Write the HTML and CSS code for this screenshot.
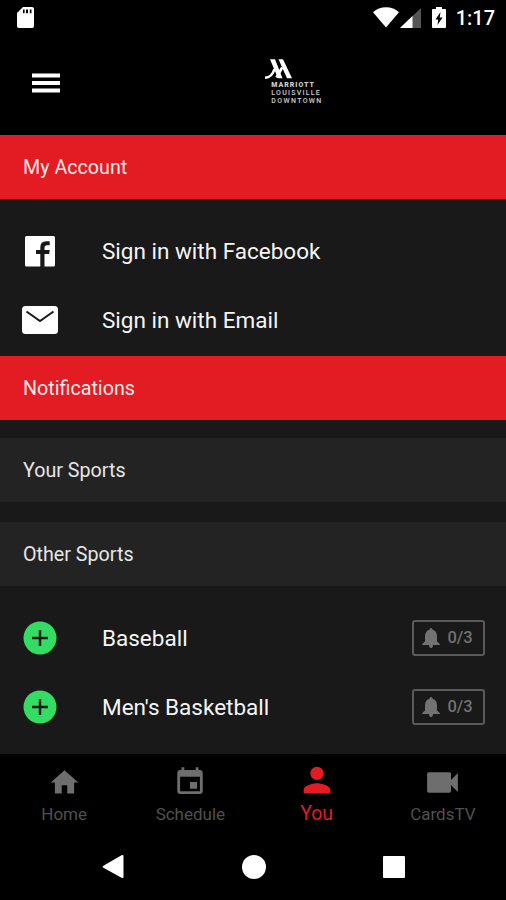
FILE: index.html
```html
<!DOCTYPE html>
<html lang="en">
  <head>
    <meta charset="utf-8" />
    <title>My Account</title>
    <link rel="stylesheet" href="styles.css">
  </head>
  <body>
    <div class="status-bar">
      <svg class="sd-card" width="17" height="21" viewBox="0 0 17 21">
        <path fill="#fff" d="M6 0h9a2 2 0 0 1 2 2v17a2 2 0 0 1-2 2H2a2 2 0 0 1-2-2V6z" />
        <path fill="#000" d="M6 2.500h1.600v3.800H6zM9 2.500h2v3.800H9zM12.800 2.500h1.700v3.800h-1.700z" />
      </svg>
      <div class="status-icons">
        <svg width="26" height="21" viewBox="0 0 26 21">
          <path fill="#fff" d="M13 20.500L0 5.200C3.600 2 8 .2 13 .2S22.400 2 26 5.200z" />
        </svg>
        <svg class="signal" width="21" height="20" viewBox="0 0 21 20">
          <path fill="#555" d="M21 0v20H0z" />
          <path fill="#fff" d="M12.500 8.100V20H0z" />
        </svg>
        <svg class="battery" width="14" height="21" viewBox="0 0 14 21">
          <path fill="#fff" d="M4 0h6v2h3a1 1 0 0 1 1 1v17a1 1 0 0 1-1 1H1a1 1 0 0 1-1-1V3a1 1 0 0 1 1-1h3z" />
          <path fill="#000" d="M8.500 5L3.500 12.500h2.700L5.500 18l5-7.500H7.700z" />
        </svg>
        <span class="clock">1:17</span>
      </div>
    </div>

    <header class="header">
      <svg class="menu" width="28" height="20" viewBox="0 0 28 20">
        <path fill="#fff" d="M0 .5h28v4H0zM0 8h28v4H0zM0 15.500h28v4H0z" />
      </svg>
      <svg class="logo" width="58" height="47" viewBox="0 0 58 47">
        <path fill="#fff" d="M5 .3h5l7.500 19h-4.500z" />
        <path fill="#fff" d="M13.500.3h4.500L27 19.300h-5z" />
        <path fill="none" stroke="#fff" stroke-width="2.600" d="M9.500 10Q7 18.500 0 18.800M17.200 8.500L11.500 18.500" />
        <g class="logo-text">
          <text class="logo-bold" x="6.300" y="27.700" textLength="42.500">MARRIOTT</text>
          <text x="6.300" y="36" textLength="48.500">LOUISVILLE</text>
          <text x="6.300" y="44.200" textLength="50">DOWNTOWN</text>
        </g>
      </svg>
    </header>

    <main class="content">
      <h2 class="section section-red">My Account</h2>
      <ul class="list">
        <li class="row">
          <svg class="row-icon" width="36" height="36" viewBox="0 0 36 36">
            <path fill="#fff" d="M4.500 3h27A1.500 1.500 0 0 1 33 4.500V32a1.500 1.500 0 0 1-1.500 1.500h-9V21h4.700l.5-4h-5.200v-2q0-2.700 2.500-2.700h2.700V8.200h-3.400q-6 0-6 6.300V17H14v4h4.300v12.500H4.500A1.500 1.500 0 0 1 3 32V4.500A1.500 1.500 0 0 1 4.500 3z" />
          </svg>
          <span class="label">Sign in with Facebook</span>
        </li>
        <li class="row">
          <svg class="row-icon" width="36" height="36" viewBox="0 0 36 36">
            <rect fill="#fff" y="4" width="36" height="28" rx="3.500" />
            <path fill="none" stroke="#191919" stroke-width="2" d="M4.500 9.500L18 19l13.500-9.500" />
          </svg>
          <span class="label">Sign in with Email</span>
        </li>
      </ul>

      <h2 class="section section-red">Notifications</h2>
      <h2 class="section section-your">Your Sports</h2>
      <h2 class="section section-other">Other Sports</h2>
      <ul class="list list-sports">
        <li class="row">
          <svg class="row-icon" width="36" height="36" viewBox="0 0 36 36">
            <circle cx="18" cy="18" r="16.500" fill="#33dc62" />
            <path stroke="#191919" stroke-width="2.500" d="M18 10v16M10 18h16" />
          </svg>
          <span class="label">Baseball</span>
          <span class="badge">
            <svg width="18" height="20" viewBox="0 0 18 20">
              <path fill="#727272" d="M9 0q1.500 0 1.500 1.800Q15 3 15 8.500V13.500l2.800 2.500v1H.2v-1L3 13.500V8.500Q3 3 7.500 1.800 7.500 0 9 0zM7 17h4q0 3-2 3t-2-3z" />
            </svg>
            0/3
          </span>
        </li>
        <li class="row">
          <svg class="row-icon" width="36" height="36" viewBox="0 0 36 36">
            <circle cx="18" cy="18" r="16.500" fill="#33dc62" />
            <path stroke="#191919" stroke-width="2.500" d="M18 10v16M10 18h16" />
          </svg>
          <span class="label">Men's Basketball</span>
          <span class="badge">
            <svg width="18" height="20" viewBox="0 0 18 20">
              <path fill="#727272" d="M9 0q1.500 0 1.500 1.800Q15 3 15 8.500V13.500l2.800 2.500v1H.2v-1L3 13.500V8.500Q3 3 7.500 1.800 7.500 0 9 0zM7 17h4q0 3-2 3t-2-3z" />
            </svg>
            0/3
          </span>
        </li>
      </ul>
    </main>

    <nav class="tabs">
      <a class="tab">
        <svg width="33" height="33" viewBox="0 0 24 24">
          <path d="M10 20v-6h4v6h5v-8h3L12 3 2 12h3v8z" />
        </svg>
        <span>Home</span>
      </a>
      <a class="tab">
        <svg width="34" height="32" viewBox="0 0 24 24" preserveAspectRatio="none">
          <path d="M17 12h-5v5h5v-5zM16 1v2H8V1H6v2H5c-1.110 0-1.990.9-1.990 2L3 19c0 1.100.89 2 2 2h14c1.100 0 2-.9 2-2V5c0-1.100-.9-2-2-2h-1V1h-2zm3 18H5V8h14v11z" />
        </svg>
        <span>Schedule</span>
      </a>
      <a class="tab tab-active">
        <svg width="40" height="40" viewBox="0 0 24 24">
          <path d="M12 12c2.210 0 4-1.790 4-4s-1.790-4-4-4-4 1.790-4 4 1.790 4 4 4zm0 2c-2.670 0-8 1.340-8 4v2h16v-2c0-2.660-5.330-4-8-4z" />
        </svg>
        <span>You</span>
      </a>
      <a class="tab">
        <svg width="41" height="41" viewBox="0 0 24 24">
          <path d="M17 10.500V7c0-.55-.45-1-1-1H4c-.55 0-1 .45-1 1v10c0 .55.45 1 1 1h12c.55 0 1-.45 1-1v-3.500l4 4v-11l-4 4z" />
        </svg>
        <span>CardsTV</span>
      </a>
    </nav>

    <div class="system-nav">
      <svg width="24" height="26" viewBox="0 0 24 26">
        <path fill="#fff" d="M2 12L20.500 1.200q2-.7 2 .8v21q0 1.500-2 .8L2 13.500q-1-.7 0-1.500z" />
      </svg>
      <svg width="24" height="24" viewBox="0 0 24 24">
        <circle fill="#fff" cx="12" cy="12" r="12" />
      </svg>
      <svg width="22" height="22" viewBox="0 0 22 22">
        <rect fill="#fff" width="22" height="22" rx="1" />
      </svg>
    </div>
  </body>
</html>
```
FILE: styles.css
```css
* {
  box-sizing: border-box;
}

body {
  margin: 0;
  height: 900px;
  display: flex;
  flex-direction: column;
  overflow: hidden;
  background-color: #000;
  color: #f5f5f5;
  font-family: Roboto, "Liberation Sans", sans-serif;
}

svg {
  display: block;
  flex: none;
}

/* status bar */
.status-bar {
  height: 36px;
  padding: 0 11px 1px 17px;
  display: flex;
  align-items: center;
  justify-content: space-between;
}

.status-icons {
  display: flex;
  align-items: center;
}

.signal {
  margin-left: 1px;
}

.battery {
  margin: 0 10px 0 11px;
}

.clock {
  font-size: 20px;
  font-weight: 500;
  color: #fff;
}

/* header */
.header {
  height: 99px;
  display: flex;
  align-items: flex-start;
  padding-left: 32px;
}

.menu {
  margin-top: 37px;
}

.logo {
  margin: 23px 0 0 205px;
}

.logo-text {
  fill: #d0d0d0;
  font-size: 7px;
  font-weight: 500;
}

.logo-bold {
  font-weight: 900;
}

/* content */
.content {
  height: 619px;
  background-color: #191919;
}

.section {
  margin: 0;
  height: 64px;
  padding-left: 23px;
  font-size: 19.7px;
  font-weight: 400;
  line-height: 66px;
  background-color: #232323;
}

.section-red {
  background-color: #e31b23;
  color: #ffe9ea;
}

.section-your {
  margin-top: 18px;
  color: #e6e6e6;
}

.section-other {
  margin-top: 20px;
  color: #e6e6e6;
}

.list {
  height: 157px;
  margin: 0;
  padding: 17px 21px 0 22px;
  list-style: none;
}

.row {
  height: 69px;
  display: flex;
  align-items: center;
}

.label {
  margin-left: 44px;
  font-size: 22.5px;
}

.badge {
  width: 73px;
  height: 36px;
  margin-left: auto;
  padding-right: 2px;
  display: flex;
  align-items: center;
  justify-content: center;
  gap: 7px;
  border: 2px solid #5a5a5a;
  border-radius: 3px;
  color: #727272;
  font-size: 16.5px;
  font-weight: 500;
}

/* bottom tabs */
.tabs {
  height: 80px;
  padding-left: 1px;
  display: grid;
  grid-template-columns: repeat(4, 1fr);
}

.tab {
  display: grid;
  grid-template-rows: 50px 20px;
  align-content: start;
  place-items: center;
  padding-top: 3px;
  color: #505050;
  font-size: 17px;
  line-height: 16px;
  text-align: center;
}

.tab span {
  padding-bottom: 6px;
}

.tab svg {
  fill: #6e6e6e;
}

.tab-active {
  padding-top: 1px;
  color: #e31b23;
  font-size: 19.5px;
}

.tab-active span {
  padding-bottom: 2px;
}

.tab-active svg {
  fill: #e31b23;
}

/* android navigation */
.system-nav {
  height: 66px;
  padding: 0 101px;
  display: flex;
  align-items: center;
  justify-content: space-between;
}
```
